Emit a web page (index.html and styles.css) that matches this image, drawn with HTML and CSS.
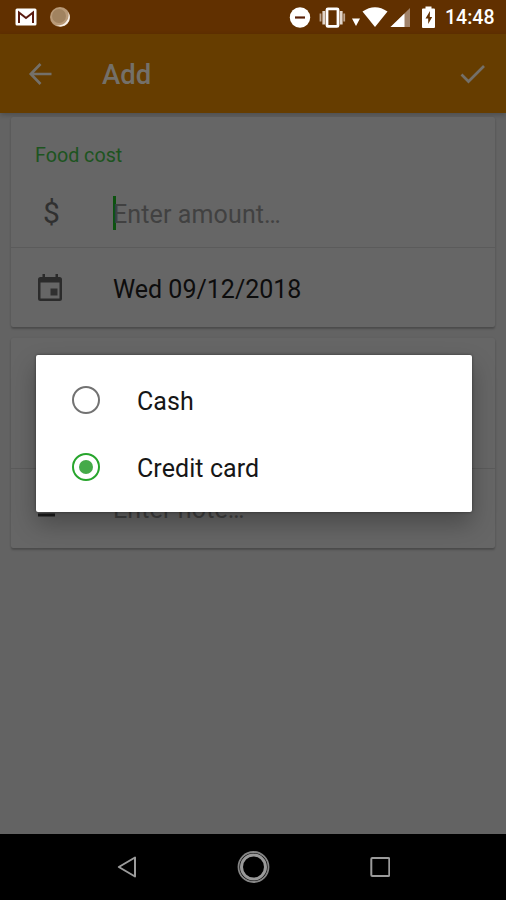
FILE: index.html
```html
<!DOCTYPE html>
<html lang="en">
<head>
<meta charset="utf-8">
<title>Add</title>
<link rel="stylesheet" href="styles.css">
</head>
<body>
<div class="screen">
  <header class="status">
    <svg class="mail" width="22" height="18" viewBox="0 0 22 18"><rect x=".5" y=".5" width="21" height="17" rx="1.500" fill="#fff"/><path d="M4 15V4.500L11 10 18 4.500V15" fill="none" stroke="#5a1b10" stroke-width="2"/></svg>
    <svg class="sync" width="20" height="20" viewBox="0 0 20 20"><circle cx="10" cy="10" r="10" fill="#b99a78"/><path d="M18 5a9 9 0 0 1-12 13 10 10 0 0 0 12-13z" fill="#f8f0e8"/><circle cx="9" cy="9" r="7" fill="#a18360"/></svg>
    <svg class="signals" width="147" height="24" viewBox="289 5 147 24"><circle cx="300" cy="17.500" r="10.200" fill="#fff"/><path d="M295 17.500h10" stroke="#5a2008" stroke-width="2.200"/><rect x="327" y="8.800" width="11" height="17.600" rx="1" fill="none" stroke="#fff" stroke-width="2.800"/><path d="M323.800 11v13.500M341.200 11v13.500" stroke="#e1d5ca" stroke-width="2.800"/><path d="M320.500 13.500v8M344.200 13.500v8" stroke="#bda58f" stroke-width="1.800"/><path d="M352 18.500h8l-4 7.500z" fill="#fff"/><path d="M362.500 11.500q12.500-8.500 25 0L375 27z" fill="#fff"/><path d="M390.500 27L410 8v19z" fill="#a1836a"/><path d="M390.500 27L404.500 13.500V27z" fill="#fff"/><path d="M422 9.500q0-1 1-1h2.500v-2h6v2h2.500q1 0 1 1v17.500q0 1-1 1h-11q-1 0-1-1z" fill="#fff"/><path d="M430 11l-4.500 7.500h2.700V24l4-7h-2.400z" fill="#613000"/></svg>
    <span class="clock">14:48</span>
  </header>
  <div class="appbar">
    <svg class="back" width="24" height="24" viewBox="0 0 24 24"><path d="M23.500 12H3M12.500 2L2.800 12l9.700 10" fill="none" stroke="#747069" stroke-width="2.700"/></svg>
    <h1>Add</h1>
    <svg class="check" width="26" height="20" viewBox="0 0 26 20"><path d="M1.500 10.500L8.500 17.500 24 2" fill="none" stroke="#747069" stroke-width="2.700"/></svg>
  </div>
  <main>
    <section class="card">
      <div class="row amount">
        <span class="label">Food cost</span>
        <div class="field"><span class="icon dollar">$</span><span class="caret"></span><span class="hint">Enter amount…</span></div>
      </div>
      <div class="row date">
        <svg class="icon" width="54" height="30" viewBox="0 0 54 30"><path d="M7.500 1h2.500v3h10.500V1H23v3h1.500q2.500 0 2.500 2.500v19q0 2.500-2.500 2.500h-19Q3 28 3 25.500v-19Q3 4 5.500 4h2zM5.500 9.500v16h19v-16z" fill="#2b2b2b" fill-rule="evenodd"/><rect x="15.500" y="15.500" width="7" height="7" fill="#303030"/></svg>
        <span class="value">Wed 09/12/2018</span>
      </div>
    </section>
    <section class="card">
      <div class="row method"></div>
      <div class="row note">
        <svg class="icon" width="54" height="24" viewBox="0 0 54 24"><path d="M3 2h24M3 10h24M3 18h17" stroke="#1c1c1c" stroke-width="3"/></svg>
        <span class="hint">Enter note…</span>
      </div>
    </section>
  </main>
  <nav>
    <svg width="20" height="24" viewBox="0 0 20 24"><path d="M18 2.500v19L1.800 12z" fill="none" stroke="#9b9b9b" stroke-width="2" stroke-linejoin="round"/></svg>
    <svg width="34" height="34" viewBox="0 0 34 34"><circle cx="16.500" cy="17" r="15" fill="none" stroke="#858585" stroke-width="1.800"/><circle cx="16.500" cy="17" r="12" fill="none" stroke="#999" stroke-width="3"/></svg>
    <svg width="20" height="20" viewBox="0 0 20 20"><rect x="1.300" y="1" width="18" height="18" rx="1" fill="none" stroke="#9b9b9b" stroke-width="2"/></svg>
  </nav>
  <div class="dialog">
    <div class="option"><span class="radio"></span><span class="choice">Cash</span></div>
    <div class="option"><span class="radio on"></span><span class="choice">Credit card</span></div>
  </div>
</div>
</body>
</html>
```
FILE: styles.css
```css
* { box-sizing: border-box; }
body { margin: 0; font-family: Roboto, "Liberation Sans", sans-serif; }
svg { display: block; flex: none; }
.screen { position: relative; display: flex; flex-direction: column; width: 506px; height: 900px; background: #636363; overflow: hidden; }
.status { display: flex; height: 34px; flex: none; background: #613000; align-items: center; padding: 0 11px 0 15px; }
.sync { margin-left: 13px; }
.signals { margin-left: auto; }
.clock { width: 50px; margin-left: 9px; color: #fff; font-size: 19.5px; line-height: 34px; font-weight: 500; white-space: nowrap; padding-top: 2px; }
.appbar { display: flex; height: 79px; flex: none; align-items: center; padding: 0 20px 0 28px; background: #663d00; box-shadow: 0 2px 5px rgba(0,0,0,.22); }
h1 { margin: 2px 0 0 50px; font-size: 27.5px; font-weight: 500; color: #747069; }
.check { margin-left: auto; }
main { flex: 1; padding: 4px 11px 0; }
.card { background: #666; border-radius: 2px; height: 210px; margin-bottom: 11px; box-shadow: 0 2px 2px rgba(0,0,0,.22), 0 0 2px rgba(0,0,0,.08); }
.row { padding: 0 24px; display: flex; align-items: center; }
.amount { height: 131px; flex-direction: column; align-items: stretch; border-bottom: 1px solid #5b5b5b; }
.label { margin-top: 27px; font-size: 19.7px; line-height: 24px; color: #1d5420; }
.field { display: flex; align-items: center; height: 34px; margin-top: 28px; }
.dollar { width: 78px; padding-left: 8px; font-size: 30px; color: #303030; line-height: 34px; }
.caret { width: 3px; height: 34px; background: #0c520f; margin-right: -3px; }
.hint, .value { font-size: 25px; line-height: 30px; white-space: nowrap; }
.hint { color: #414141; padding-top: 3px; letter-spacing: .12px; }
.value { color: #0d0d0d; }
.date { height: 79px; padding-top: 5px; }
.row > .icon { width: 54px; margin-right: 24px; }
.date > .icon { margin-top: -5px; }
.method { height: 131px; border-bottom: 1px solid #5b5b5b; }
.note { height: 79px; }
nav { display: flex; height: 66px; flex: none; background: #000; align-items: center; justify-content: space-between; padding: 0 116px 0 117px; }
.dialog { position: absolute; left: 36px; top: 355px; width: 436px; height: 157px; padding: 11px 0; background: #fff; border-radius: 2px; box-shadow: 0 12px 24px rgba(0,0,0,.28), 0 0 3px rgba(0,0,0,.45); }
.option { display: flex; height: 67px; align-items: center; padding-left: 36px; font-size: 25px; color: #161616; }
.choice { padding-top: 3px; letter-spacing: .08px; }
.radio { display: flex; width: 28px; height: 28px; margin-right: 37px; border: 2px solid #727272; border-radius: 50%; align-items: center; justify-content: center; }
.radio.on { border-color: #27a52c; }
.radio.on::before { content: ""; width: 14px; height: 14px; border-radius: 50%; background: #45aa49; }
```
